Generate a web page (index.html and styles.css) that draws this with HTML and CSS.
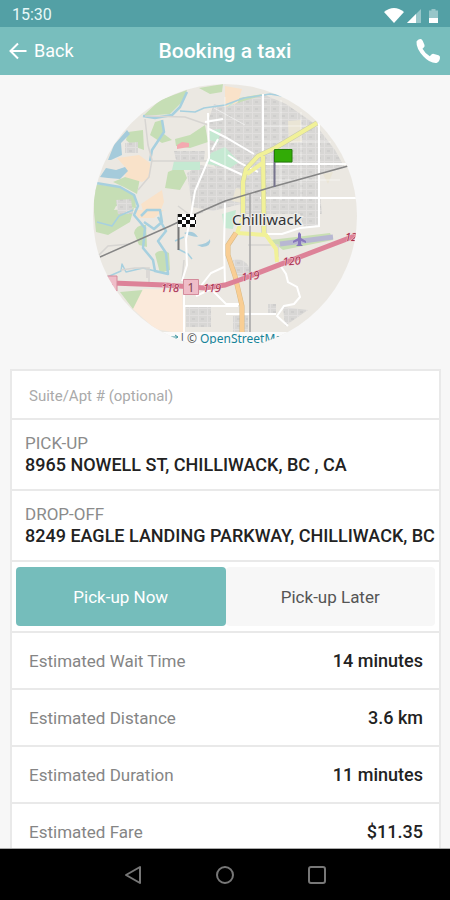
FILE: index.html
```html
<!DOCTYPE html>
<html lang="en">
<head>
<meta charset="utf-8">
<meta name="viewport" content="width=device-width, initial-scale=1">
<title>Booking a taxi</title>
<link rel="stylesheet" href="styles.css">
</head>
<body>
<div class="status">
  <time>15:30</time>
  <svg class="status-icons" viewBox="0 0 56 18" aria-hidden="true">
    <path fill="#fff" d="M0 6Q10-2 20 6L10 17Z"/>
    <path fill="#fff" opacity=".4" d="M23 17L37 3V17Z"/>
    <path fill="#fff" d="M23 17L32 8V17Z"/>
    <path fill="#fff" opacity=".4" d="M45 4.500h2.500V3h4v1.500H54V12h-9Z"/>
    <path fill="#fff" d="M45 12h9v5h-9Z"/>
  </svg>
</div>
<header class="header">
  <a class="back" href="#">
    <svg class="back-icon" viewBox="0 0 18 18" aria-hidden="true"><path d="M17.500 9H2M9 1.500L1.500 9L9 16.500" fill="none" stroke="#fff" stroke-width="2"/></svg>
    Back
  </a>
  <h1 class="title">Booking a taxi</h1>
  <button class="call" type="button" aria-label="Call">
    <svg class="call-icon" viewBox="0 0 26 26" aria-hidden="true"><path fill="#fff" d="M1.500 3.500Q3 .8 5.500 1Q7 1 7.800 3L9.500 7Q10 8.600 8.500 9.800L7.500 10.800Q10 15.500 14.800 18.200L16.200 16.800Q17.500 15.500 19 16L23.500 17.300Q25.300 18 25 20Q24.500 23.800 21.500 25Q15 25.500 8.500 18.500Q1 10.500 1.500 3.500Z"/></svg>
  </button>
</header>
<main class="content">
  <svg class="map" viewBox="92 83 266 266" role="img" aria-label="Map of Chilliwack">
    <defs>
      <clipPath id="round"><circle cx="225" cy="216" r="132"/></clipPath>
      <pattern id="blocks" width="9" height="7" patternUnits="userSpaceOnUse">
        <path fill="#d8d7d5" d="M0 0h9v7H0Z"/><path d="M0 .5H9M.5 0V7" stroke="#e1dfde"/><path fill="#cfcecd" d="M3 3h3v2H3Z"/>
      </pattern>
    </defs>
    <g clip-path="url(#round)">
      <path fill="#ebe8e2" d="M92 83h266v266H92Z"/>
      <g fill="#c6deb5">
        <path d="M143 116L160 100L187 90L184 100L170 114ZM199 88L223 84L222 92L210 94ZM128 132L143 130L144 150L133 146L126 140ZM155 122L162 120L164 134L172 140L162 143L150 135ZM175 139L190 135L205 125L208 142L190 148L176 146ZM165 188L168 172L182 166L187 178L180 190ZM113 182L125 177L140 178L137 194L124 187ZM94 184L120 187L135 195L136 208L116 206L110 218L94 212ZM94 212L134 208L130 222L108 235L96 232ZM134 233Q136 224 146 225L147 247L139 245ZM155 254Q160 248 169 253L170 270L160 273ZM120 292L143 290L142 304L133 309ZM228 100L262 94L255 103L235 108Z"/>
      </g>
      <g fill="#f9e2c9">
        <path d="M117 158L139 155L150 163L150 178L142 182L125 177L126 168ZM141 204L162 190L164 202L160 212L144 214ZM134 210H164L154 218H138ZM225 86L242 89L238 102L225 113Z"/>
        <path fill="#fbeadb" d="M143 289L182 290L184 334L155 329L133 309Z"/>
      </g>
      <g fill="url(#blocks)">
        <path d="M225 107L250 99L265 95L286 104L315 124L335 150L345 168L318 174L322 214L243 214L241 186L225 181L209 158L208 121L214 104ZM174 151H205L204 160H176ZM187 173L200 165L225 170L245 180V203L213 211L192 207ZM125 143L138 142V153H125ZM116 200L131 199L133 214L118 214ZM186 306H211V327H186ZM268 304H276V313H268ZM283 307L308 310L285 326ZM248 214H320V226L304 228L300 214ZM233 260Q243 257 249 267V279L236 275ZM233 316L248 314V332H233Z"/>
      </g>
      <g fill="#c5e9d2"><path d="M174 161H200V170H172ZM211 153L225 147L239 162L230 168L207 164ZM227 108L239 99L230 104ZM210 130L221 129L218 143L210 140ZM222 214L236 210L233 229L224 228Z"/></g>
      <path fill="#eae5d5" d="M288 121L301 120L302 142L289 143ZM236 188L242 189V203L232 201ZM323 174L333 172L328 184Z"/>
      <path fill="#f4a9b0" d="M177 145L182 142L189 143V147L177 149Z"/>
      <path fill="#c9dfb4" d="M270 240L330 233L333 240L283 250Z"/>
      <path d="M280 244L333 237" stroke="#b8b7d2" stroke-width="5"/>
      <g fill="#a5cbdb">
        <path d="M108 160L114 145L127 130L130 134L121 143L122 155L111 160ZM100 177L106 168L116 170L125 167L128 171L120 179L108 178ZM184 233Q193 229 198 237Q189 236 184 233ZM197 245Q208 244 210 239Q212 246 202 247Z"/>
      </g>
      <g fill="none" stroke="#a7d0df" stroke-width="2.500" stroke-linejoin="round">
        <path d="M143 116L155 118L172 115L180 107L187 92M96 183L120 187L134 195L138 206L134 215L145 228L143 248L153 260L155 271L168 274L166 253L158 241L166 231L158 217M141 216L147 210L160 210L162 222L154 229L144 222M162 120L164 132L152 150L150 161"/>
        <path stroke-width="1.500" d="M180 111L195 112L204 108L225 105L244 98L270 94L300 99M97 222L112 226L119 216L133 210M105 278L121 271L122 264L126 272L143 268L155 271M175 241L184 237M178 249L188 254L192 259"/>
      </g>
      <g fill="none" stroke="#d7d5d2" stroke-width="1.500">
        <path d="M145 119L148 145L152 160L149 177L138 190M145 116L185 117L208 125M152 161H208M97 257L108 246L130 244M178 206L190 215L203 212M147 268V278M121 270L135 268H149V282M184 260L182 280M248 245H278V257M298 88L310 94"/>
      </g>
      <g fill="none" stroke="#fff" stroke-width="2">
        <path d="M208 113L209 158L195 191L191 215L186 239L187 265L182 281M209 129L225 137L254 154M205 122L223 119M210 160L245 176M218 139L212 150M263 94V160M319 122V215M263 164H355M260 198H357M228 155L240 163L258 172M225 203L224 248L225 283M200 287L211 273L224 267M184 291V333M184 306H238M196 296L211 289L226 304H240M250 234H282L300 228L319 226V212M280 265L286 274L288 282L297 287L300 297L294 304L284 306L277 316L288 326M226 314H276"/>
        <path stroke-width="1" opacity=".5" d="M281 100V200M301 112V198M264 126H317M264 142H331M214 108L245 125M225 97V180M264 180H340"/>
      </g>
      <g fill="none" stroke="#c9cbae" stroke-width="5" stroke-linejoin="round">
        <path d="M317 123L275 148L258 156L246 169L243 182V217M263 156L264 233"/>
        <path stroke="#f1f198" stroke-width="4" d="M317 123L275 148L258 156L246 169L243 182V217L237 233L266 235L276 249L277 262M263 156L264 233M247 174L264 162"/>
      </g>
      <path d="M236 233L228 245V255L235 276L242 306V334" fill="none" stroke="#d9b983" stroke-width="5"/>
      <path d="M236 233L228 245V255L235 276L242 306V334" fill="none" stroke="#f9ce94" stroke-width="4"/>
      <path d="M250 193V334" stroke="#a5a5a5" stroke-width="1.500"/>
      <path d="M100 257L170 226L202 211L225 201L272 187L348 166" fill="none" stroke="#858585" stroke-width="1.500"/>
      <path d="M112 283L165 285L205 288L225 285L245 278L357 235" fill="none" stroke="#dd8298" stroke-width="5"/>
      <path fill="#efbdc8" stroke="#d48b9b" d="M106 276H117V291H106ZM183.500 279.500h15v15h-15Z"/>
      <g class="map-road">
        <text x="191" y="292">1</text>
        <g class="map-exit">
          <text x="170" y="292">118</text><text x="212" y="292">119</text>
          <text transform="translate(251 280) rotate(-8)">119</text>
          <text transform="translate(292 265) rotate(-5)">120</text>
          <text transform="translate(351 241)">12</text>
        </g>
      </g>
      <path fill="#8778bd" d="M299 232L301 234V238L306 241V243L301 241V244L303 246H296L298 244V241L293 243V241L298 238V234Z"/>
      <text class="map-city" x="232" y="225">Chilliwack</text>
      <path d="M274.500 187V150" stroke="#77748d" stroke-width="2"/>
      <path fill="#32ab06" stroke="#237d08" d="M274.500 149.500h17.500v12.500h-17.500Z"/>
      <path d="M178.500 250V214" stroke="#777" stroke-width="2"/>
      <path fill="#fff" d="M178 214h18v13h-18Z"/>
      <path fill="#111" d="M178 214h4v3h-4ZM186 214h4v3h-4ZM182 217h4v3h-4ZM190 217h5v3h-5ZM178 220h4v4h-4ZM186 220h4v4h-4ZM182 224h4v3h-4ZM190 224h5v3h-5ZM194 214h2v3h-2ZM195 220h1v4h-1Z"/>
      <path fill="#fafafa" d="M92 332h266v17H92Z"/>
      <text class="map-credit" x="200" y="343">OpenStreetMap</text>
      <text class="map-copy" x="179" y="343">|</text>
      <text class="map-copy" x="187" y="343">©</text>
      <path d="M171 337H177M175 335L178 337L175 339" fill="none" stroke="#36909b"/>
      <path fill="#f7f7f7" d="M92 344h266v6H92Z"/>
    </g>
  </svg>
  <form class="card">
    <input class="suite" type="text" placeholder="Suite/Apt # (optional)" aria-label="Suite/Apt # (optional)">
    <section class="place"><h2 class="place-label">PICK-UP</h2><p class="address">8965 NOWELL ST, CHILLIWACK, BC , CA</p></section>
    <section class="place"><h2 class="place-label">DROP-OFF</h2><p class="address">8249 EAGLE LANDING PARKWAY, CHILLIWACK, BC</p></section>
    <div class="timing">
      <button class="choice chosen" type="button" aria-pressed="true">Pick-up Now</button>
      <button class="choice" type="button" aria-pressed="false">Pick-up Later</button>
    </div>
    <dl class="estimates">
      <div class="estimate"><dt>Estimated Wait Time</dt><dd>14 minutes</dd></div>
      <div class="estimate"><dt>Estimated Distance</dt><dd>3.6 km</dd></div>
      <div class="estimate"><dt>Estimated Duration</dt><dd>11 minutes</dd></div>
      <div class="estimate"><dt>Estimated Fare</dt><dd>$11.35</dd></div>
    </dl>
  </form>
</main>
<nav class="system">
  <button class="key" type="button" aria-label="Back"><svg viewBox="0 0 20 20"><path d="M17 2V18L3 10Z"/></svg></button>
  <button class="key" type="button" aria-label="Home"><svg viewBox="0 0 20 20"><circle cx="10" cy="10" r="8"/></svg></button>
  <button class="key" type="button" aria-label="Recent apps"><svg viewBox="0 0 20 20"><rect x="2" y="2" width="16" height="16" rx="2"/></svg></button>
</nav>
</body>
</html>
```
FILE: styles.css
```css
* {
  box-sizing: border-box;
}

body {
  margin: 0;
  height: 100vh;
  display: flex;
  flex-direction: column;
  background: #f7f7f7;
  color: #222;
  font-family: Roboto, "Liberation Sans", sans-serif;
  font-size: 17px;
  line-height: 22px;
}

h1, h2, p, dl, dd {
  margin: 0;
}

button, input {
  margin: 0;
  border: 0;
  font: inherit;
}

.status {
  flex: none;
  height: 27px;
  padding: 2px 10px 0 12px;
  display: flex;
  align-items: center;
  justify-content: space-between;
  background: #53a0a5;
  color: #e8f8f8;
  font-size: 16px;
}

.status-icons {
  width: 56px;
  height: 18px;
}

.header {
  flex: none;
  height: 48px;
  padding: 0 9px;
  display: grid;
  grid-template-columns: 1fr auto 1fr;
  align-items: center;
  background: #78bebd;
  color: #fff;
}

.back {
  display: flex;
  align-items: center;
  gap: 7px;
  color: inherit;
  font-size: 18px;
  text-decoration: none;
}

.back-icon {
  width: 18px;
  height: 18px;
}

.title {
  font-size: 21px;
  font-weight: 500;
}

.call {
  justify-self: end;
  padding: 0;
  background: none;
}

.call-icon {
  display: block;
  width: 26px;
  height: 26px;
}

.content {
  flex: 1;
  min-height: 0;
  overflow: hidden;
  padding-top: 8px;
}

.map {
  display: block;
  width: 266px;
  height: 266px;
  margin: 0 auto 20px;
}

.map-road {
  fill: #804050;
  font: 12px "Noto Sans", sans-serif;
  text-anchor: middle;
}

.map-exit {
  fill: #a52e4c;
  font-size: 11px;
  font-style: italic;
  paint-order: stroke;
  stroke: #f3ccd4;
  stroke-width: 1px;
}

.map-city {
  fill: #333;
  font: 15px "Noto Sans", sans-serif;
  paint-order: stroke;
  stroke: #eee;
  stroke-width: 2px;
}

.map-credit,
.map-copy {
  fill: #168398;
  font: 12px "Noto Sans", sans-serif;
}

.map-copy {
  fill: #555;
}

.card {
  margin: 0 9px 0 10px;
  border: 2px solid #e9e9e9;
  background: #fff;
}

.suite {
  display: block;
  width: 100%;
  height: 49px;
  padding: 2px 17px 0;
  border-bottom: 2px solid #e9e9e9;
  background: none;
  color: #222;
  font-size: 15px;
}

.suite::placeholder {
  color: #aaa;
  opacity: 1;
}

.place {
  padding: 12px 0 13px 13px;
  border-bottom: 2px solid #e9e9e9;
}

.place-label {
  color: #8b8b8b;
  font-size: 17px;
  font-weight: 400;
}

.address {
  font-size: 18px;
  font-weight: 500;
  white-space: nowrap;
}

.timing {
  display: flex;
  padding: 5px 4px;
  border-bottom: 2px solid #e9e9e9;
}

.choice {
  flex: 1;
  height: 59px;
  border-radius: 4px;
  background: #f7f7f7;
  color: #555;
  font-size: 17px;
}

.chosen {
  background: #75bdbb;
  color: #fff;
}

.estimate {
  height: 57px;
  padding: 0 16px 0 17px;
  display: flex;
  align-items: center;
  justify-content: space-between;
  border-bottom: 2px solid #e9e9e9;
}

.estimate dt {
  color: #858585;
}

.estimate dd {
  font-size: 18px;
  font-weight: 500;
}

.system {
  flex: none;
  height: 52px;
  display: flex;
  align-items: center;
  justify-content: center;
  gap: 72px;
  border-top: 1px solid #aaa;
  background: #000;
}

.key {
  width: 20px;
  height: 20px;
  padding: 0;
  background: none;
}

.key svg {
  display: block;
  fill: none;
  stroke: #777;
  stroke-width: 2;
  stroke-linejoin: round;
}
```
